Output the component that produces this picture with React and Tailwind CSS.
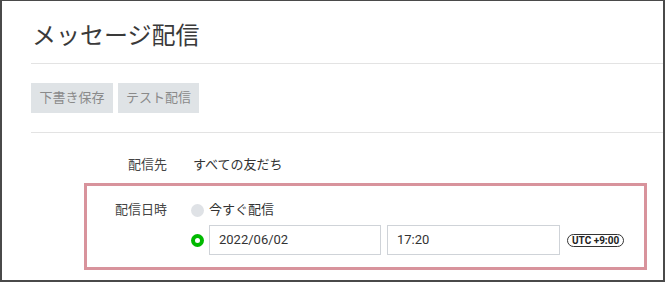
import React from 'react';

const font = { fontFamily: 'Roboto, "Noto Sans CJK JP", sans-serif' };

function Radio({ checked }) {
    if (checked) {
        return (
            <span className="w-[13px] h-[13px] rounded-full bg-[#00b900] flex items-center justify-center shrink-0">
                <span className="w-[5px] h-[5px] rounded-full bg-white" />
            </span>
        );
    }
    return <span className="w-[13px] h-[13px] rounded-full bg-[#dfe2e6] shrink-0" />;
}

export default function App() {
    return (
        <div
            className="w-[665px] h-[282px] bg-white border-l-2 border-t border-r-2 border-b-2 border-[#4a4a4a] overflow-hidden text-[#333]"
            style={font}
        >
            {/* Header */}
            <div className="pl-[29px]">
                <h1 className="pt-[19px] h-[62px] pl-[1px] text-[24px] leading-[32px] text-[#3a3a3a] font-normal">
                    メッセージ配信
                </h1>
                <div className="border-t border-[#e3e3e3]" />

                {/* Actions */}
                <div className="flex gap-[5px] pt-[19px] pb-[19px]">
                    <button className="h-[30px] w-[82px] bg-[#dfe3e6] text-[#8a8a8a] text-[13px]">下書き保存</button>
                    <button className="h-[30px] w-[81px] bg-[#dfe3e6] text-[#8a8a8a] text-[13px]">テスト配信</button>
                </div>
                <div className="border-t border-[#e3e3e3]" />
            </div>

            {/* 配信先 */}
            <div className="flex items-center mt-[22px] text-[13px] leading-[20px]">
                <div className="w-[165px] text-right text-[#444]">配信先</div>
                <div className="ml-[26px] text-[#333]">すべての友だち</div>
            </div>

            {/* 配信日時 */}
            <div className="ml-[82px] mt-[8px] w-[563px] border-[3px] border-[#d8939c] pt-[14px] pb-[12px] text-[13px]">
                <div className="flex">
                    <div className="w-[80px] text-right leading-[20px] text-[#444]">配信日時</div>
                    <div className="ml-[24px] flex flex-col gap-[5px]">
                        <div className="flex items-center gap-[5px] leading-[20px]">
                            <Radio />
                            <span>今すぐ配信</span>
                        </div>
                        <div className="flex items-center">
                            <Radio checked />
                            <div className="ml-[5px] w-[172px] h-[30px] border border-[#cfd3d8] flex items-center px-[9px] text-[#333]">
                                2022/06/02
                            </div>
                            <div className="ml-[6px] w-[173px] h-[30px] border border-[#cfd3d8] flex items-center px-[9px] text-[#333]">
                                17:20
                            </div>
                            <span className="ml-[7px] h-[13px] px-[4px] rounded-full border border-[#333] text-[10px] font-bold leading-[11px] flex items-center text-[#222]">
                                UTC +9:00
                            </span>
                        </div>
                    </div>
                </div>
            </div>
        </div>
    );
}
